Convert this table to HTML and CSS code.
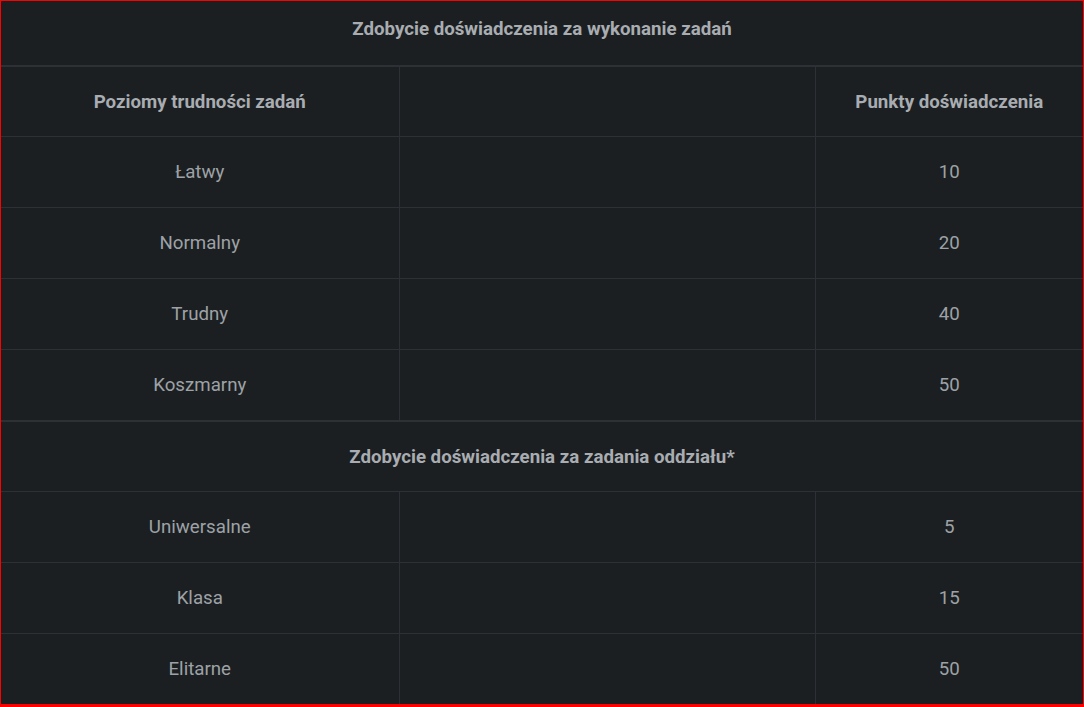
FILE: index.html
```html
<!DOCTYPE html>
<html lang="pl">
<head>
<meta charset="utf-8">
<title>Zdobycie doświadczenia</title>
<link rel="stylesheet" href="styles.css">
</head>
<body>
<div class="frame">
  <table class="xp">
    <colgroup>
      <col class="c1">
      <col class="c2">
      <col class="c3">
    </colgroup>
    <tbody>
      <tr class="section first">
        <th colspan="3">Zdobycie doświadczenia za wykonanie zadań</th>
      </tr>
      <tr class="head">
        <th>Poziomy trudności zadań</th>
        <th></th>
        <th>Punkty doświadczenia</th>
      </tr>
      <tr><td>Łatwy</td><td></td><td>10</td></tr>
      <tr><td>Normalny</td><td></td><td>20</td></tr>
      <tr><td>Trudny</td><td></td><td>40</td></tr>
      <tr><td>Koszmarny</td><td></td><td>50</td></tr>
      <tr class="section">
        <th colspan="3">Zdobycie doświadczenia za zadania oddziału*</th>
      </tr>
      <tr><td>Uniwersalne</td><td></td><td>5</td></tr>
      <tr><td>Klasa</td><td></td><td>15</td></tr>
      <tr><td>Elitarne</td><td></td><td>50</td></tr>
    </tbody>
  </table>
</div>
</body>
</html>
```
FILE: styles.css
```css
html, body {
  margin: 0;
  padding: 0;
  background: #1b1f22;
}

.frame {
  width: 1084px;
  height: 707px;
  box-sizing: border-box;
  border: 1px solid #ff0000;
  border-bottom-width: 3px;
  overflow: hidden;
  background: #1b1f22;
}

.xp {
  width: 1082px;
  border-collapse: collapse;
  table-layout: fixed;
  font-family: Roboto, "Liberation Sans", sans-serif;
  font-size: 18.7px;
  color: #9ea2a6;
}

.c1 { width: 398px; }
.c2 { width: 416px; }
.c3 { width: 268px; }

.xp th,
.xp td {
  padding: 0;
  height: 70px;
  text-align: center;
  vertical-align: middle;
  border-top: 1px solid #2d3135;
  border-left: 1px solid #2d3135;
}

.xp th {
  font-weight: 700;
  color: #a9adb1;
}

.xp .head th {
  height: 69px;
}

.xp tr > :first-child {
  border-left: none;
}

.xp .section th {
  border-top: 2px solid #2d3135;
  height: 69px;
}

.xp .section.first th {
  border-top: none;
  border-bottom: 2px solid #2d3135;
  height: 56px;
  padding-bottom: 8px;
}
```
